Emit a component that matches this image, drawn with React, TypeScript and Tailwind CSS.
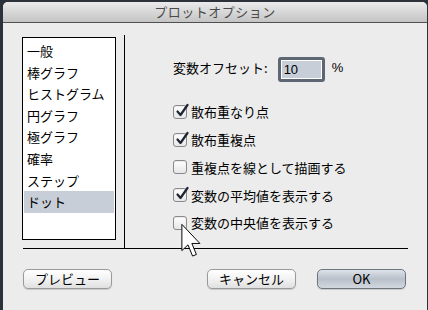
import React from 'react'

const FONT = { fontFamily: '"Noto Sans CJK JP", "Liberation Sans", sans-serif' }

const CATEGORIES = ['一般', '棒グラフ', 'ヒストグラム', '円グラフ', '極グラフ', '確率', 'ステップ', 'ドット']

const OPTIONS = [
  { label: '散布重なり点', checked: true },
  { label: '散布重複点', checked: true },
  { label: '重複点を線として描画する', checked: false },
  { label: '変数の平均値を表示する', checked: true },
  { label: '変数の中央値を表示する', checked: false },
]

function CheckBox({ checked }: { checked: boolean }) {
  return (
    <div className="relative w-[14px] h-[14px] rounded-[3px] border border-[#8a8a8a] bg-gradient-to-b from-white to-[#e6e6e6] shadow-[inset_0_1px_1px_rgba(0,0,0,0.08)]">
      {checked && (
        <svg className="absolute left-[1px] -top-[3px]" width="15" height="15" viewBox="0 0 15 15">
          <path d="M2.5 8.5 L5.5 12 L12.5 2" fill="none" stroke="#1e2430" strokeWidth="2.2" strokeLinecap="round" strokeLinejoin="round" />
        </svg>
      )}
    </div>
  )
}

function Button({ label, primary }: { label: string; primary?: boolean }) {
  return (
    <div
      className={`w-[89px] h-[20px] flex items-center justify-center rounded-[5px] border text-[13px] text-black ${
        primary
          ? 'border-[#6e7580] bg-gradient-to-b from-[#dfe3ea] via-[#b9c0ca] to-[#d3d8df]'
          : 'border-[#9a9a9a] bg-gradient-to-b from-white via-[#f2f2f2] to-[#e0e0e0]'
      } shadow-[0_1px_1px_rgba(0,0,0,0.15)]`}
    >
      {label}
    </div>
  )
}

export default function App() {
  return (
    <div className="w-[428px] h-[310px] bg-[#2b323a] pl-[3px] pt-[2px] pr-[1px] overflow-hidden" style={FONT}>
      <div className="relative flex flex-col w-full h-[308px] rounded-t-[5px] bg-[#ececec] overflow-hidden">
        {/* Title bar */}
        <div className="h-[21px] flex items-center justify-center bg-gradient-to-b from-[#ebebeb] to-[#c4c4c4] border-b border-[#505050] text-[13px] text-[#4a4a4a] tracking-[0.5px]">
          プロットオプション
        </div>

        {/* Content */}
        <div className="flex mt-[12px]">
          <div className="w-[103px] h-[213px] ml-[19px] border-r border-black pt-[2px]">
            <div className="w-[94px] h-[203px] bg-white border border-black pt-[2px] px-px">
              {CATEGORIES.map((c) => (
                <div
                  key={c}
                  className={`h-[21.6px] flex items-center pl-[3px] text-[13px] text-black ${c === 'ドット' ? 'bg-[#c8ced8]' : ''}`}
                >
                  {c}
                </div>
              ))}
            </div>
          </div>

          <div className="flex-1 pl-[48px] pt-[22px]">
            <div className="flex items-center h-[25px]">
              <span className="text-[13px] text-black -mt-[4px]">変数オフセット:</span>
              <div className="ml-[10px] w-[47px] h-[25px] rounded-[3px] border-[3px] border-[#5d6672] bg-white p-px">
                <div className="w-full h-full bg-[#c8ced8] text-[13px] leading-[17px] pl-[2px] text-black" style={{ fontFamily: '"Liberation Sans", sans-serif' }}>
                  10
                </div>
              </div>
              <span className="ml-[7px] text-[13px] text-black -mt-[4px]" style={{ fontFamily: '"Liberation Sans", sans-serif' }}>%</span>
            </div>

            <div className="mt-[16px]">
              {OPTIONS.map((o) => (
                <div key={o.label} className="h-[27.8px] flex items-center">
                  <CheckBox checked={o.checked} />
                  <span className="ml-[4px] text-[13px] text-black">{o.label}</span>
                </div>
              ))}
            </div>
          </div>
        </div>

        <div className="ml-[20px] w-[385px] h-px bg-black" />

        {/* Buttons */}
        <div className="flex mt-[20px] ml-[20px]">
          <Button label="プレビュー" />
          <div className="ml-[95px]">
            <Button label="キャンセル" />
          </div>
          <div className="ml-[21px]">
            <Button label="OK" primary />
          </div>
        </div>

        {/* Mouse cursor */}
        <svg className="absolute left-[178px] top-[221px]" width="21" height="36" viewBox="0 0 12 20">
          <path d="M0.5 0.5 L0.5 15.5 L4 12.2 L6.6 18.6 L8.8 17.7 L6.2 11.4 L10.8 11.4 Z" fill="white" stroke="black" strokeWidth="0.55" strokeLinejoin="round" />
        </svg>
      </div>
    </div>
  )
}
